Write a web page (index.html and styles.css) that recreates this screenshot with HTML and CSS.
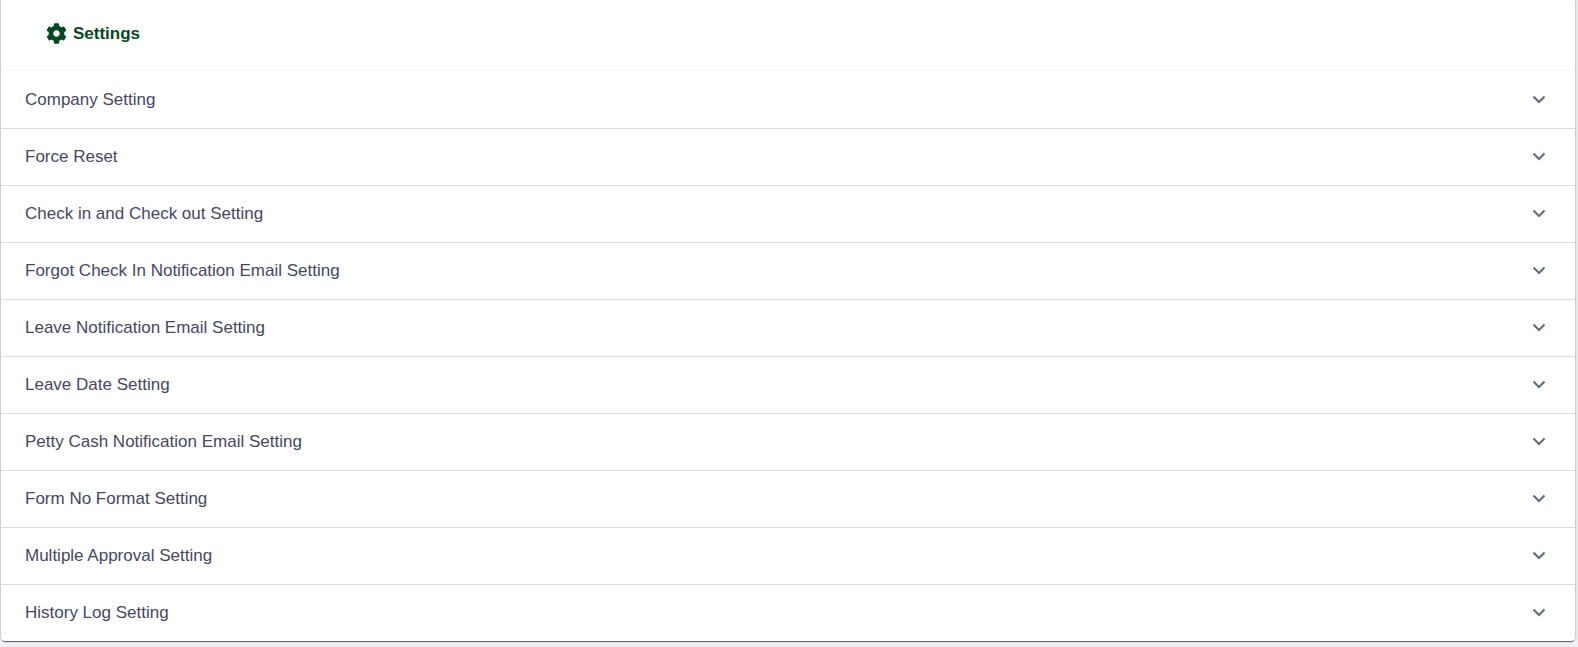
FILE: index.html
```html
<!DOCTYPE html>
<html lang="en">
<head>
<meta charset="utf-8">
<title>Settings</title>
<link rel="stylesheet" href="styles.css">
</head>
<body>
<main class="card">
  <header class="card-header">
    <svg class="gear" viewBox="0 0 512 512" aria-hidden="true"><path d="M487.4 315.7l-42.6-24.6c4.3-23.2 4.3-47 0-70.2l42.6-24.6c4.9-2.8 7.1-8.6 5.5-14-11.1-35.6-30-67.8-54.7-94.6-3.8-4.1-10-5.1-14.8-2.3L380.8 110c-17.9-15.4-38.5-27.3-60.8-35.1V25.8c0-5.6-3.9-10.5-9.4-11.7-36.7-8.2-74.3-7.8-109.2 0-5.5 1.2-9.4 6.1-9.4 11.7V75c-22.2 7.9-42.8 19.8-60.8 35.1L88.7 85.5c-4.9-2.8-11-1.9-14.8 2.3-24.7 26.7-43.6 58.9-54.7 94.6-1.7 5.4.6 11.2 5.5 14L67.3 221c-4.3 23.2-4.3 47 0 70.2l-42.6 24.6c-4.9 2.8-7.1 8.6-5.5 14 11.1 35.6 30 67.8 54.7 94.6 3.8 4.1 10 5.1 14.8 2.3l42.6-24.6c17.9 15.4 38.5 27.3 60.8 35.1v49.2c0 5.6 3.9 10.5 9.4 11.7 36.7 8.2 74.3 7.8 109.2 0 5.5-1.2 9.4-6.1 9.4-11.7v-49.2c22.2-7.9 42.8-19.8 60.8-35.1l42.6 24.6c4.9 2.8 11 1.9 14.8-2.3 24.7-26.7 43.6-58.9 54.7-94.6 1.5-5.5-.7-11.3-5.6-14.1zM256 336c-44.1 0-80-35.9-80-80s35.9-80 80-80 80 35.9 80 80-35.9 80-80 80z"/></svg>
    <h1 class="title">Settings</h1>
  </header>
  <ul class="accordion">
    <li class="row"><span>Company Setting</span><svg class="chev" viewBox="0 0 16 16" aria-hidden="true"><path d="M2.500 4.500 8 10 13.500 4.500"/></svg></li>
    <li class="row"><span>Force Reset</span><svg class="chev" viewBox="0 0 16 16" aria-hidden="true"><path d="M2.500 4.500 8 10 13.500 4.500"/></svg></li>
    <li class="row"><span>Check in and Check out Setting</span><svg class="chev" viewBox="0 0 16 16" aria-hidden="true"><path d="M2.500 4.500 8 10 13.500 4.500"/></svg></li>
    <li class="row"><span>Forgot Check In Notification Email Setting</span><svg class="chev" viewBox="0 0 16 16" aria-hidden="true"><path d="M2.500 4.500 8 10 13.500 4.500"/></svg></li>
    <li class="row"><span>Leave Notification Email Setting</span><svg class="chev" viewBox="0 0 16 16" aria-hidden="true"><path d="M2.500 4.500 8 10 13.500 4.500"/></svg></li>
    <li class="row"><span>Leave Date Setting</span><svg class="chev" viewBox="0 0 16 16" aria-hidden="true"><path d="M2.500 4.500 8 10 13.500 4.500"/></svg></li>
    <li class="row"><span>Petty Cash Notification Email Setting</span><svg class="chev" viewBox="0 0 16 16" aria-hidden="true"><path d="M2.500 4.500 8 10 13.500 4.500"/></svg></li>
    <li class="row"><span>Form No Format Setting</span><svg class="chev" viewBox="0 0 16 16" aria-hidden="true"><path d="M2.500 4.500 8 10 13.500 4.500"/></svg></li>
    <li class="row"><span>Multiple Approval Setting</span><svg class="chev" viewBox="0 0 16 16" aria-hidden="true"><path d="M2.500 4.500 8 10 13.500 4.500"/></svg></li>
    <li class="row"><span>History Log Setting</span><svg class="chev" viewBox="0 0 16 16" aria-hidden="true"><path d="M2.500 4.500 8 10 13.500 4.500"/></svg></li>
  </ul>
</main>
</body>
</html>
```
FILE: styles.css
```css
* { box-sizing: border-box; }
html, body { height: 100%; }
body {
  margin: 0;
  background: #f0f0f4;
  font-family: "Liberation Sans", Arial, sans-serif;
  overflow: hidden;
}
.card {
  width: 1574px;
  margin-left: 1px;
  background: #fff;
  border-radius: 0 0 4px 4px;
  box-shadow: 0 2px 1px -1px rgba(0,0,0,.6), 1px 0 2px rgba(0,0,0,.2), -1px 0 1px rgba(0,0,0,.15);
}
.card-header {
  height: 71px;
  padding: 0 0 3px 45px;
  display: flex;
  align-items: center;
  gap: 6px;
  border-bottom: 1px solid #f5f5f6;
}
.gear { width: 21px; height: 21px; fill: #03481e; }
.title {
  margin: 0;
  font-size: 17px;
  font-weight: 700;
  color: #03481e;
}
.accordion { list-style: none; margin: 0; padding: 1px 0 0; }
.row {
  height: 57px;
  padding: 0 28px 0 24px;
  display: flex;
  align-items: center;
  justify-content: space-between;
  font-size: 17px;
  color: #464762;
  border-bottom: 1px solid #dcdce0;
}
.row:last-child { border-bottom: 0; height: 56px; }
.chev { width: 16px; height: 16px; fill: none; stroke: #5f6b7c; stroke-width: 2; }
```
